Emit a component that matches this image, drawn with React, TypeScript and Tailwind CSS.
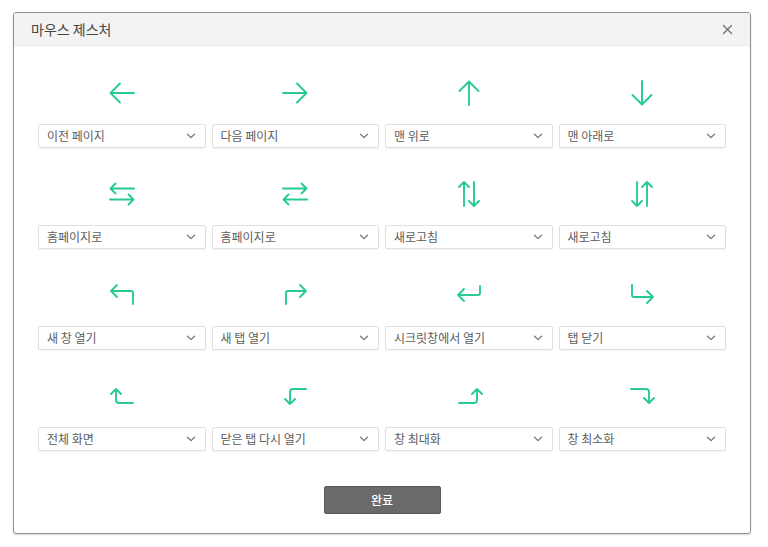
import React from "react";

const G = "#27cb8e";

type P = { d: string };
const Arrow = ({ d }: P) => (
  <svg width="28" height="28" viewBox="0 0 28 28" fill="none" stroke={G} strokeWidth="1.9" strokeLinecap="round" strokeLinejoin="round">
    <path d={d} />
  </svg>
);

const arrows: string[] = [
  "M26 14 H2.5 M12 4.5 L2.5 14 L12 23.5",
  "M2 14 H25.5 M16 4.5 L25.5 14 L16 23.5",
  "M14 26 V2.5 M4.5 12 L14 2.5 L23.5 12",
  "M14 2 V25.5 M4.5 16 L14 25.5 L23.5 16",
  "M26 8.5 H2.5 M7.5 3.5 L2.5 8.5 L7.5 13.5 M2 19.5 H25.5 M20.5 14.5 L25.5 19.5 L20.5 24.5",
  "M2 8.5 H25.5 M20.5 3.5 L25.5 8.5 L20.5 13.5 M26 19.5 H2.5 M7.5 14.5 L2.5 19.5 L7.5 24.5",
  "M9 26 V2 M4 7 L9 2 L14 7 M19 2 V26 M14 21 L19 26 L24 21",
  "M9 2 V26 M4 21 L9 26 L14 21 M19 26 V2 M14 7 L19 2 L24 7",
  "M3 10 H23 Q25 10 25 12 V23 M9 4 L3 10 L9 16",
  "M5 23 V12 Q5 10 7 10 H25 M19 4 L25 10 L19 16",
  "M25 5 V12 Q25 14 23 14 H3 M9 8 L3 14 L9 20",
  "M4 4 V14 Q4 16 6 16 H25 M19 10 L25 16 L19 22",
  "M8 7 V18 Q8 21 11 21 H25 M3 12 L8 7 L13 12",
  "M25 7 H12 Q9 7 9 10 V22 M4 17 L9 22 L14 17",
  "M4 21 H19 Q22 21 22 18 V7 M17 12 L22 7 L27 12",
  "M3 7 H18 Q21 7 21 10 V21 M16 16 L21 21 L26 16",
];

const labels = [
  "이전 페이지",
  "다음 페이지",
  "맨 위로",
  "맨 아래로",
  "홈페이지로",
  "홈페이지로",
  "새로고침",
  "새로고침",
  "새 창 열기",
  "새 탭 열기",
  "시크릿창에서 열기",
  "탭 닫기",
  "전체 화면",
  "닫은 탭 다시 열기",
  "창 최대화",
  "창 최소화",
];

const Select = ({ label }: { label: string }) => (
  <div className="h-[24px] flex items-center justify-between border border-[#e0e0e0] rounded-[2px] bg-white pl-[8px] pr-[9px] shadow-[0_1px_1px_rgba(0,0,0,0.05)]">
    <span className="text-[12px] text-[#5c5c5c] leading-none">{label}</span>
    <svg width="10" height="6" viewBox="0 0 10 6" fill="none" stroke="#777" strokeWidth="1.3" strokeLinecap="round" strokeLinejoin="round">
      <path d="M1.5 1.2 L5 4.6 L8.5 1.2" />
    </svg>
  </div>
);

export default function App() {
  return (
    <div
      className="w-[768px] h-[547px] bg-white pt-[12px] pl-[13px]"
      style={{ fontFamily: '"Noto Sans CJK KR", "Noto Sans", sans-serif' }}
    >
      <div className="w-[738px] h-[522px] border border-[#919191] rounded-[3px] bg-white flex flex-col overflow-hidden shadow-[0_1px_2px_rgba(0,0,0,0.15)]">
        <div className="h-[33px] shrink-0 bg-[#f3f3f3] border-b border-[#e8e8e8] flex items-center justify-between pl-[17px] pr-[17px]">
          <span className="text-[14px] text-[#444] leading-none">마우스 제스처</span>
          <svg width="11" height="11" viewBox="0 0 11 11" stroke="#707070" strokeWidth="1.3" strokeLinecap="round">
            <path d="M1.5 1.5 L9.5 9.5 M9.5 1.5 L1.5 9.5" />
          </svg>
        </div>
        <div className="px-[24px] pt-[33px] flex flex-col">
          <div className="grid grid-cols-4 gap-x-[6px] gap-y-[32px]">
            {labels.map((l, i) => (
              <div key={i} className="flex flex-col">
                <div className="h-[28px] flex justify-center">
                  <Arrow d={arrows[i]} />
                </div>
                <div className="mt-[17px]">
                  <Select label={l} />
                </div>
              </div>
            ))}
          </div>
          <div className="flex justify-center mt-[35px]">
            <button className="w-[117px] h-[28px] bg-[#6a6a6a] border border-[#5a5a5a] rounded-[2px] text-white text-[12px] font-medium leading-none">
              완료
            </button>
          </div>
        </div>
      </div>
    </div>
  );
}
